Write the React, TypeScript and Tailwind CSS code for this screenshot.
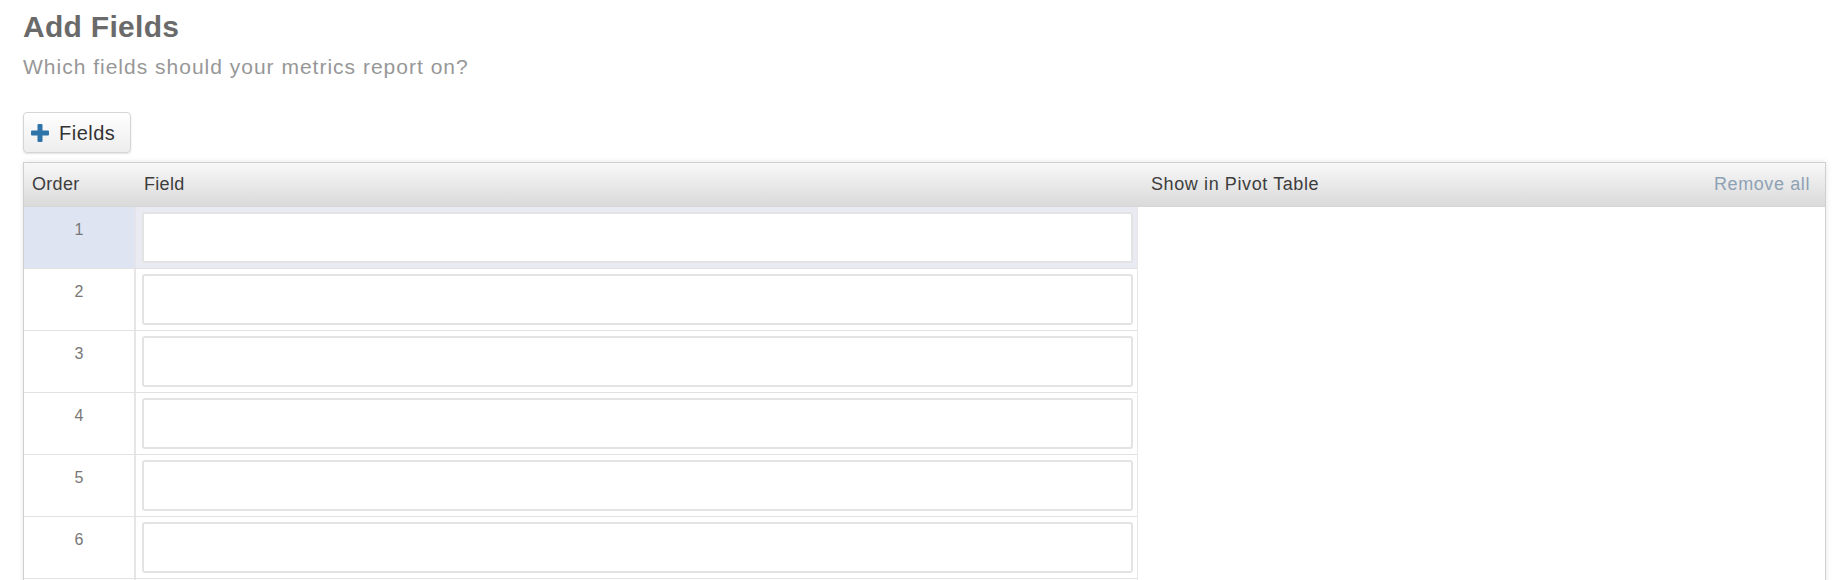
import React from "react";

const rows = [1, 2, 3, 4, 5, 6, 7];

function PlusIcon() {
  return (
    <svg width="18" height="18" viewBox="0 0 18 18" className="shrink-0">
      <rect x="6.5" y="0" width="5" height="18" rx="1" fill="#2f74a8" />
      <rect x="0" y="6.5" width="18" height="5" rx="1" fill="#2f74a8" />
    </svg>
  );
}

export default function App() {
  return (
    <div className="h-[580px] w-[1835px] overflow-hidden bg-white font-['Liberation_Sans',Arial,sans-serif]">
      <div className="pl-[23px] pr-[9px] pt-[10px]">
        {/* 제목 */}
        <h1 className="text-[30px] leading-[34px] font-bold text-[#6a6a6a] tracking-[0.3px]">
          Add Fields
        </h1>
        <p className="mt-[11px] text-[21px] leading-[24px] text-[#979797] tracking-[1px]">
          Which fields should your metrics report on?
        </p>

        {/* 버튼 */}
        <button className="mt-[33px] flex items-center gap-[10px] h-[41px] w-[108px] pl-[7px] rounded-[4px] border border-[#d5d5d5] bg-gradient-to-b from-white to-[#ededed] shadow-[0_1px_2px_rgba(0,0,0,0.12)]">
          <PlusIcon />
          <span className="text-[20px] text-[#333] tracking-[0.5px]">Fields</span>
        </button>

        {/* 테이블 */}
        <div className="mt-[9px] border border-[#cfcfcf] shadow-[0_0_6px_rgba(0,0,0,0.10)]">
          {/* 헤더 */}
          <div className="flex items-center h-[44px] bg-gradient-to-b from-[#f8f8f8] to-[#dadada] text-[18px] text-[#3d3d3d] border-b border-[#d6d6d6]">
            <div className="w-[112px] pl-[8px] tracking-[0.3px]">Order</div>
            <div className="w-[1002px] pl-[8px] tracking-[0.3px]">Field</div>
            <div className="flex-1 pl-[13px] tracking-[0.6px]">Show in Pivot Table</div>
            <div className="pr-[15px] text-[#8ea1b4] tracking-[0.6px]">Remove all</div>
          </div>

          {/* 본문 */}
          <div className="flex">
            <div className="w-[1114px] border-r border-[#e8e8e8]">
              {rows.map((n) => (
                <div key={n} className="flex h-[62px] border-b border-[#e2e2e2]">
                  <div
                    className={
                      n === 1
                        ? "w-[112px] flex justify-center pt-[14px] border-r-2 border-[#e4e4ec] bg-[#dfe4f2] text-[16px] leading-[18px] text-[#777]"
                        : "w-[112px] flex justify-center pt-[14px] border-r-2 border-[#e6e6e6] text-[16px] leading-[18px] text-[#777]"
                    }
                  >
                    {n < 7 ? n : ""}
                  </div>
                  <div
                    className={
                      n === 1
                        ? "flex-1 pl-[6px] pr-[4px] py-[5px] bg-[#eaeaf2]"
                        : "flex-1 pl-[6px] pr-[4px] py-[5px]"
                    }
                  >
                    <input
                      className="w-full h-full rounded-[3px] border-2 border-[#e3e3e3] bg-white outline-none"
                      defaultValue=""
                    />
                  </div>
                </div>
              ))}
            </div>
            <div className="flex-1" />
          </div>
        </div>
      </div>
    </div>
  );
}
